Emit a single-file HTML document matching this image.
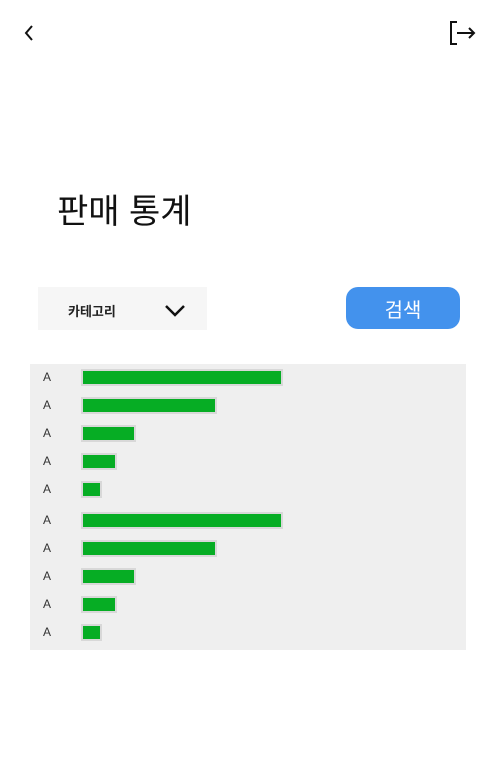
<!DOCTYPE html>
<html><head><meta charset="utf-8"><style>
body{margin:0;width:500px;height:774px;background:#fff;position:relative;font-family:"Liberation Sans","Noto Sans CJK KR",sans-serif;overflow:hidden}
.a{position:absolute}
.row{position:absolute;left:30px;width:436px;height:20px}
.row .l{position:absolute;left:13px;top:3px;font-size:12px;color:#333}
.row .f{position:absolute;left:51px;top:2px;height:17px;background:#d8d8d8;box-sizing:border-box;padding:2px}
.row .f div{background:#06ad24;height:100%}
</style></head><body>
<svg class="a" style="left:18px;top:22px" width="20" height="22"><path d="M14 4 L8 11 L14 18" fill="none" stroke="#111" stroke-width="2"/></svg>
<svg class="a" style="left:448px;top:19px" width="30" height="28"><path d="M9 3 H3 V25 H9" fill="none" stroke="#111" stroke-width="2"/><path d="M9 14 H26 M21 9 L26 14 L21 19" fill="none" stroke="#111" stroke-width="2"/></svg>
<div class="a" style="left:57px;top:184px;font-size:34px;color:#111">판매 통계</div>
<div class="a" style="left:38px;top:287px;width:169px;height:43px;background:#f6f6f6"></div>
<div class="a" style="left:68px;top:301px;font-size:13px;color:#222;font-weight:bold">카테고리</div>
<svg class="a" style="left:163px;top:301px" width="24" height="18"><path d="M3 5 L12 14 L21 5" fill="none" stroke="#111" stroke-width="2.5"/></svg>
<div class="a" style="left:346px;top:287px;width:114px;height:42px;background:#4392ed;border-radius:12px;color:#fff;font-size:20px;text-align:center;line-height:48px">검색</div>
<div class="a" style="left:30px;top:364px;width:436px;height:286px;background:#efefef"></div>
<div class="row" style="top:367px"><span class="l">A</span><div class="f" style="width:202px"><div></div></div></div>
<div class="row" style="top:395px"><span class="l">A</span><div class="f" style="width:136px"><div></div></div></div>
<div class="row" style="top:423px"><span class="l">A</span><div class="f" style="width:55px"><div></div></div></div>
<div class="row" style="top:451px"><span class="l">A</span><div class="f" style="width:36px"><div></div></div></div>
<div class="row" style="top:479px"><span class="l">A</span><div class="f" style="width:21px"><div></div></div></div>
<div class="row" style="top:510px"><span class="l">A</span><div class="f" style="width:202px"><div></div></div></div>
<div class="row" style="top:538px"><span class="l">A</span><div class="f" style="width:136px"><div></div></div></div>
<div class="row" style="top:566px"><span class="l">A</span><div class="f" style="width:55px"><div></div></div></div>
<div class="row" style="top:594px"><span class="l">A</span><div class="f" style="width:36px"><div></div></div></div>
<div class="row" style="top:622px"><span class="l">A</span><div class="f" style="width:21px"><div></div></div></div>
</body></html>
